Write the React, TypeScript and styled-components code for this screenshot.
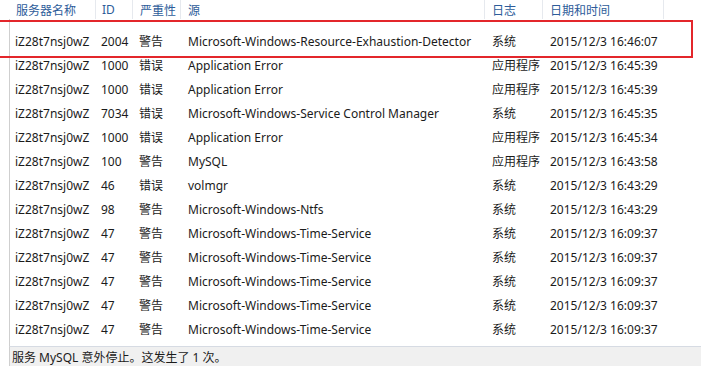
import React from "react";
import styled, { createGlobalStyle } from "styled-components";

const Global = createGlobalStyle`
  html, body { margin: 0; padding: 0; background: #ffffff; overflow: hidden; }
  body { font-family: "Segoe UI", "Noto Sans", "Noto Sans CJK SC", sans-serif; font-size: 12px; color: #1b1b1b; }
`;

type Col = { key: string; title: string; width: string; pad: number; hpad: number };

const cols: Col[] = [
  { key: "server", title: "服务器名称", width: "86px", pad: 5, hpad: 6 },
  { key: "id", title: "ID", width: "37px", pad: 5, hpad: 6 },
  { key: "level", title: "严重性", width: "48px", pad: 6, hpad: 7 },
  { key: "source", title: "源", width: "304px", pad: 7, hpad: 7 },
  { key: "log", title: "日志", width: "58px", pad: 7, hpad: 7 },
  { key: "time", title: "日期和时间", width: "121px", pad: 7, hpad: 7 },
];

const template = cols.map((c) => c.width).join(" ") + " 1fr";

type Row = { id: string; level: string; source: string; log: string; time: string };

const rows: Row[] = [
  { id: "2004", level: "警告", source: "Microsoft-Windows-Resource-Exhaustion-Detector", log: "系统", time: "2015/12/3 16:46:07" },
  { id: "1000", level: "错误", source: "Application Error", log: "应用程序", time: "2015/12/3 16:45:39" },
  { id: "1000", level: "错误", source: "Application Error", log: "应用程序", time: "2015/12/3 16:45:39" },
  { id: "7034", level: "错误", source: "Microsoft-Windows-Service Control Manager", log: "系统", time: "2015/12/3 16:45:35" },
  { id: "1000", level: "错误", source: "Application Error", log: "应用程序", time: "2015/12/3 16:45:34" },
  { id: "100", level: "警告", source: "MySQL", log: "应用程序", time: "2015/12/3 16:43:58" },
  { id: "46", level: "错误", source: "volmgr", log: "系统", time: "2015/12/3 16:43:29" },
  { id: "98", level: "警告", source: "Microsoft-Windows-Ntfs", log: "系统", time: "2015/12/3 16:43:29" },
  { id: "47", level: "警告", source: "Microsoft-Windows-Time-Service", log: "系统", time: "2015/12/3 16:09:37" },
  { id: "47", level: "警告", source: "Microsoft-Windows-Time-Service", log: "系统", time: "2015/12/3 16:09:37" },
  { id: "47", level: "警告", source: "Microsoft-Windows-Time-Service", log: "系统", time: "2015/12/3 16:09:37" },
  { id: "47", level: "警告", source: "Microsoft-Windows-Time-Service", log: "系统", time: "2015/12/3 16:09:37" },
  { id: "47", level: "警告", source: "Microsoft-Windows-Time-Service", log: "系统", time: "2015/12/3 16:09:37" },
];

const Page = styled.div`
  position: relative;
  width: 701px;
  height: 366px;
  display: flex;
  flex-direction: column;
  background: #ffffff;
  overflow: hidden;
`;

const Header = styled.div`
  display: grid;
  grid-template-columns: 10px ${template};
  height: 19px;
  flex: none;
`;

const HeaderCell = styled.div<{ $pad: number; $sep: boolean }>`
  display: flex;
  align-items: center;
  padding-left: ${(p) => p.$pad}px;
  color: #2d5c9a;
  white-space: nowrap;
  overflow: hidden;
  border-right: ${(p) => (p.$sep ? "1px solid #e6e9ee" : "none")};
  box-sizing: border-box;
`;

const Body = styled.div`
  flex: 1;
  margin-left: 9px;
  border-left: 1px solid #cfcfcf;
  display: flex;
  flex-direction: column;
`;

const DataRow = styled.div<{ $first: boolean }>`
  display: grid;
  grid-template-columns: ${template};
  height: ${(p) => (p.$first ? 34 : 24)}px;
  padding-top: ${(p) => (p.$first ? 10 : 0)}px;
  box-sizing: border-box;
`;

const Cell = styled.div<{ $pad: number }>`
  display: flex;
  align-items: center;
  padding-left: ${(p) => p.$pad}px;
  white-space: nowrap;
  overflow: hidden;
`;

const StatusBar = styled.div`
  flex: none;
  height: 19px;
  margin-left: 9px;
  border-left: 1px solid #cfcfcf;
  border-top: 1px solid #d6dbe3;
  background: #f0f0f0;
  display: flex;
  align-items: center;
  padding-left: 2px;
  color: #1b1b1b;
`;

const Highlight = styled.div`
  position: absolute;
  left: -4px;
  top: 20px;
  width: 697px;
  height: 38px;
  border: 2px solid #e3262b;
  box-sizing: border-box;
  pointer-events: none;
`;

export default function App() {
  return (
    <>
      <Global />
      <Page>
        <Header>
          <HeaderCell $pad={0} $sep={false} />
          {cols.map((c) => (
            <HeaderCell key={c.key} $pad={c.hpad} $sep={true}>
              {c.title}
            </HeaderCell>
          ))}
          <HeaderCell $pad={0} $sep={false} />
        </Header>
        <Body>
          {rows.map((r, i) => {
            const values = ["iZ28t7nsj0wZ", r.id, r.level, r.source, r.log, r.time];
            return (
              <DataRow key={i} $first={i === 0}>
                {values.map((v, j) => (
                  <Cell key={j} $pad={cols[j].pad}>
                    {v}
                  </Cell>
                ))}
                <Cell $pad={0} />
              </DataRow>
            );
          })}
        </Body>
        <StatusBar>服务 MySQL 意外停止。这发生了 1 次。</StatusBar>
        <Highlight />
      </Page>
    </>
  );
}
